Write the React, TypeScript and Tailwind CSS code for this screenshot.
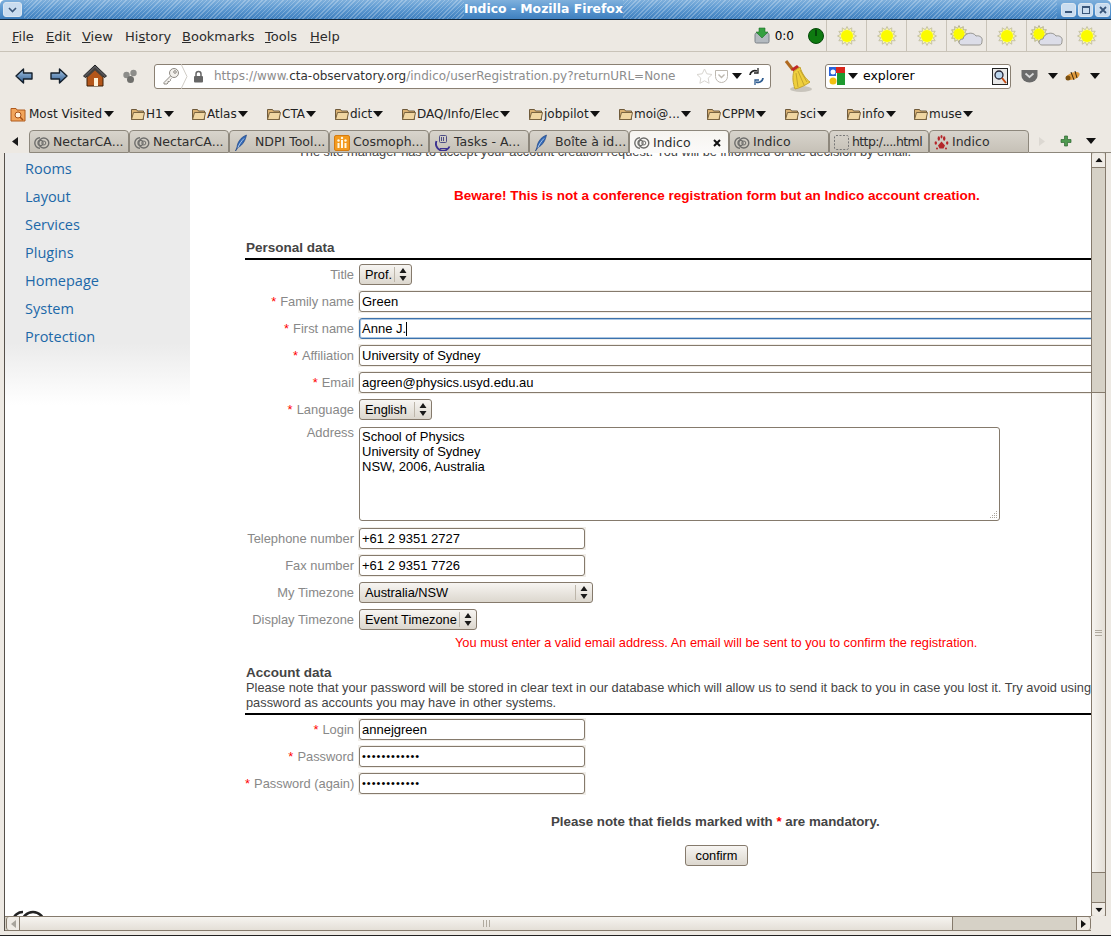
import type { ReactNode } from 'react';

const sunPoints = (cx: number, cy: number, r1: number, r2: number) =>
  Array.from({ length: 24 }, (_, i) => {
    const a = (i * Math.PI) / 12;
    const r = i % 2 ? r2 : r1;
    return `${(cx + r * Math.cos(a)).toFixed(1)},${(cy + r * Math.sin(a)).toFixed(1)}`;
  }).join(' ');

const Sun = () => (
  <svg width="20" height="20" viewBox="0 0 20 20">
    <polygon points={sunPoints(10, 10, 9.5, 6.5)} fill="#faf8a0" stroke="#bdb9a0" strokeWidth="0.8" />
    <circle cx="10" cy="10" r="6" fill="#fbfb00" />
  </svg>
);

const Cloudy = () => (
  <svg width="34" height="22" viewBox="0 0 34 22">
    <polygon points={sunPoints(9, 9, 8.5, 5.8)} fill="#faf8a0" stroke="#a8a480" strokeWidth="0.8" />
    <circle cx="9" cy="9" r="5.500" fill="#fbfb00" />
    <path d="M12 20c-4 0-4-6 1-6 1-6 10-8 13-3 4-1 7 2 6 5 0 3-1 4-3 4z" fill="#dcdde8" stroke="#8f8d88" strokeWidth="0.900" />
  </svg>
);

const Folder = () => (
  <svg width="16" height="15" viewBox="0 0 16 15" className="shrink-0">
    <path d="M1.500 3.500h5l1 1.500h6v8.500h-12z" fill="#d9b173" stroke="#6f5a3a" strokeWidth="1" />
    <path d="M3.500 6.500h11l-1.500 7h-11.500z" fill="#f0d6a2" stroke="#7a6440" strokeWidth="1" />
  </svg>
);

const Swirl = () => (
  <svg width="16" height="14" viewBox="0 0 16 14" className="shrink-0" fill="none" stroke="#6e6e6c">
    <path d="M6 1.800a5.200 5.200 0 1 0 0 10.400" strokeWidth="1.400" />
    <circle cx="9.800" cy="7" r="5" strokeWidth="1.400" />
    <circle cx="6.500" cy="7" r="2.600" strokeWidth="1.100" />
    <circle cx="9.800" cy="7" r="2" strokeWidth="1" />
  </svg>
);

const Feather = () => (
  <svg width="14" height="18" viewBox="0 0 14 18" className="shrink-0">
    <path d="M12.500 1C7 3 3.500 8 3 13l-1.500 4 2.500-3.500C9 11 11.500 6 12.500 1z" fill="#3268b4" stroke="#1d3f80" strokeWidth="0.600" />
    <path d="M10 4.500C7.500 7 5 10.500 4 13.500" stroke="#cfe0f5" strokeWidth="0.800" fill="none" />
  </svg>
);

const Cosmo = () => (
  <svg width="16" height="16" viewBox="0 0 16 16" className="shrink-0">
    <rect x="0.500" y="0.500" width="15" height="15" rx="1.500" fill="#f39a1d" stroke="#d57c10" />
    <path d="M4.500 8v5M8 5v8M11.500 8v5" stroke="#fff8e4" strokeWidth="2" />
    <circle cx="4.500" cy="5.500" r="1.200" fill="#fff8e4" />
    <circle cx="8" cy="3" r="1.200" fill="#fff8e4" />
    <circle cx="11.500" cy="5.500" r="1.200" fill="#fff8e4" />
  </svg>
);

const Tasks = () => (
  <svg width="17" height="17" viewBox="0 0 17 17" className="shrink-0" fill="none">
    <path d="M2.500 7a6.500 6.500 0 0 0 13 5.500" stroke="#3c3290" strokeWidth="1.900" />
    <path d="M6 14.500h9" stroke="#3c3290" />
    <rect x="5.500" y="1.500" width="7" height="7" rx="1" stroke="#4d4d86" />
    <path d="M7.500 3v4M9.500 3v4" stroke="#4d4d86" />
  </svg>
);

const Dashed = () => (
  <svg width="15" height="15" viewBox="0 0 15 15" className="shrink-0" fill="none">
    <rect x="0.500" y="0.500" width="14" height="14" rx="1.500" stroke="#777" strokeDasharray="2 1.500" />
  </svg>
);

const Paw = () => (
  <svg width="15" height="16" viewBox="0 0 15 16" className="shrink-0" fill="#b4262a">
    <path d="M7.500 6.500l3.500 4-1.500 3h-4l-1.500-3z" />
    <ellipse cx="1.800" cy="8" rx="1.200" ry="1.800" />
    <ellipse cx="13.200" cy="8" rx="1.200" ry="1.800" />
    <ellipse cx="4.800" cy="3.500" rx="1.200" ry="2.200" />
    <ellipse cx="10.200" cy="3.500" rx="1.200" ry="2.200" />
    <ellipse cx="7.500" cy="1.800" rx="1" ry="1.800" />
    <circle cx="3" cy="13.500" r="1" />
    <circle cx="12" cy="13.500" r="1" />
  </svg>
);

const DownCaret = ({ className = '' }: { className?: string }) => (
  <svg width="10" height="6" viewBox="0 0 10 6" className={`shrink-0 ${className}`}><path d="M0 0h10L5 6z" fill="#111" /></svg>
);

const Updown = () => (
  <svg width="8" height="13" viewBox="0 0 8 13" className="shrink-0" fill="#1a1a1a">
    <path d="M4 0l3.500 5h-7zM4 13l3.500-5h-7z" />
  </svg>
);

const NavArrow = ({ flip = false }: { flip?: boolean }) => (
  <svg width="18" height="16" viewBox="0 0 18 16" className={flip ? 'scale-x-[-1]' : ''}>
    <defs>
      <linearGradient id="navg" x1="0" y1="0" x2="0" y2="1"><stop offset="0" stopColor="#a9c8e6" /><stop offset="1" stopColor="#2e5c90" /></linearGradient>
    </defs>
    <path d="M1 8l7.500-7v4h8.500v6h-8.500v4z" fill="url(#navg)" stroke="#15202c" strokeWidth="1.400" strokeLinejoin="round" />
  </svg>
);

const bookmarks = [
  { label: 'H1', w: 'w-[61px]' },
  { label: 'Atlas', w: 'w-[75px]' },
  { label: 'CTA', w: 'w-[68px]' },
  { label: 'dict', w: 'w-[67px]' },
  { label: 'DAQ/Info/Elec', w: 'w-[127px]' },
  { label: 'jobpilot', w: 'w-[90px]' },
  { label: 'moi@...', w: 'w-[88px]' },
  { label: 'CPPM', w: 'w-[78px]' },
  { label: 'sci', w: 'w-[62px]' },
  { label: 'info', w: 'w-[67px]' },
  { label: 'muse', w: 'w-[70px]' },
];

const tabs: { icon: ReactNode; label: string; active?: boolean; tight?: boolean }[] = [
  { icon: <Swirl />, label: 'NectarCA...' },
  { icon: <Swirl />, label: 'NectarCA...' },
  { icon: <Feather />, label: ' NDPI Tool...' },
  { icon: <Cosmo />, label: 'Cosmoph...' },
  { icon: <Tasks />, label: 'Tasks - A...' },
  { icon: <Feather />, label: ' Boîte à id...' },
  { icon: <Swirl />, label: 'Indico', active: true },
  { icon: <Swirl />, label: 'Indico' },
  { icon: <Dashed />, label: 'http:/....html', tight: true },
  { icon: <Paw />, label: 'Indico' },
];

const sideLinks = ['Rooms', 'Layout', 'Services', 'Plugins', 'Homepage', 'System', 'Protection'];

const Row = ({ label, required, children }: { label: string; required?: boolean; children: ReactNode }) => (
  <div className="flex h-[27px] items-center">
    <div className="w-[110px] shrink-0 whitespace-nowrap pr-px text-right text-[12.9px] text-[#888]">
      {required && <span className="mr-1 text-[#f00]">*</span>}{label}
    </div>
    <div className="ml-[3px] flex min-w-0 flex-1 items-center">{children}</div>
  </div>
);

const Field = ({ value, focus, w = 'w-[800px]', type }: { value: string; focus?: boolean; w?: string; type?: string }) => (
  <div className={`flex h-[23px] shrink-0 items-center bg-[#f1eee9] px-px ${w}`}>
    <div className={`flex h-[21px] w-full items-center rounded-[3px] border bg-white pl-[2px] text-[13px] text-black ${focus ? 'border-[#3c72ac] shadow-[0_0_0_1px_#a9c5e2_inset]' : 'border-[#857a6c]'}`}>
      <span className={type === 'password' ? 'text-[11px] tracking-[1px]' : ''}>{value}</span>
      {focus && <span className="h-[14px] w-px bg-black" />}
    </div>
  </div>
);

const Select = ({ value, w }: { value: string; w: string }) => (
  <div className={`ml-px flex h-[21px] items-center rounded-[3px] border border-[#857a6c] bg-gradient-to-b from-[#f7f5f2] to-[#dcd7ce] pl-[5px] pr-[4px] text-black ${w}`}>
    <span className="flex-1 whitespace-nowrap">{value}</span>
    <span className="mr-[4px] h-[15px] w-px bg-[#bdb6aa]" />
    <Updown />
  </div>
);

export default function App() {
  return (
    <div className="flex h-[936px] w-[1111px] flex-col overflow-hidden rounded-t-[5px] bg-[#ede9e3] font-['DejaVu_Sans',sans-serif] text-[12px] text-[#2e2e2e]">
      {/* title bar */}
      <div className="flex h-[20px] shrink-0 items-center border-b border-[#10263c] bg-gradient-to-b from-[#7fb0dc] via-[#5a97d0] to-[#3f7fbe]">
        <div className="ml-[3px] flex h-[15px] w-[19px] items-center justify-center rounded-[3px] border border-[#dbe6f0] bg-[#c9dcef]">
          <svg width="9" height="6" viewBox="0 0 9 6"><path d="M1 1l3.500 3.500L8 1" fill="none" stroke="#39567a" strokeWidth="1.600" /></svg>
        </div>
        <div className="ml-[2px] h-full w-[440px] bg-[repeating-linear-gradient(135deg,#ffffff40_0,#ffffff40_1px,transparent_1px,transparent_3px)]" />
        <div className="w-[159px] shrink-0 whitespace-nowrap text-center text-[12.4px] font-bold text-white">Indico - Mozilla Firefox</div>
        <div className="h-full flex-1 bg-[repeating-linear-gradient(135deg,#ffffff40_0,#ffffff40_1px,transparent_1px,transparent_3px)]" />
        <div className="mr-[1px] flex gap-[2px] pl-[4px]">
          {['min', 'max', 'close'].map(k => (
            <div key={k} className="flex h-[14px] w-[15px] items-center justify-center rounded-[3px] border border-[#dbe6f0] bg-[#c9dcef]">
              {k === 'min' && <div className="mt-[5px] h-[2px] w-[7px] bg-[#39567a]" />}
              {k === 'max' && <div className="h-[8px] w-[8px] border border-t-2 border-[#39567a]" />}
              {k === 'close' && <svg width="8" height="8" viewBox="0 0 8 8"><path d="M1 1l6 6M7 1L1 7" stroke="#39567a" strokeWidth="1.800" /></svg>}
            </div>
          ))}
        </div>
      </div>

      {/* menu */}
      <div className="flex h-[32px] shrink-0 items-stretch border-b border-[#c9c3b8] pl-[12px]">
        <div className="flex items-center pt-[2px] text-[13px] text-[#2b2b2b]">
          <span className="w-[34px]"><u>F</u>ile</span>
          <span className="w-[36px]"><u>E</u>dit</span>
          <span className="w-[43px]"><u>V</u>iew</span>
          <span className="w-[57px]">Hi<u>s</u>tory</span>
          <span className="w-[83px]"><u>B</u>ookmarks</span>
          <span className="w-[45px]"><u>T</u>ools</span>
          <span><u>H</u>elp</span>
        </div>
        <div className="flex flex-1 items-center justify-end">
          <svg width="16" height="17" viewBox="0 0 16 17" className="mr-[5px]">
            <rect x="1" y="6" width="14" height="10" rx="1.500" fill="#b4bac0" stroke="#7c8288" />
            <path d="M5 1h6v4h3l-6 6-6-6h3z" fill="#35a040" stroke="#1f6e28" strokeWidth="0.600" />
          </svg>
          <span className="mr-[14px] text-[12px] text-black">0:0</span>
          <svg width="16" height="16" viewBox="0 0 16 16" className="mr-[2px]">
            <circle cx="8" cy="8" r="7.500" fill="#0e7a10" stroke="#06480a" />
            <path d="M8 1.500v6.500" stroke="#04360a" strokeWidth="1.500" />
          </svg>
          {['s', 's', 's', 'c', 's', 'c', 's'].map((t, i) => (
            <div key={i} className="flex h-full w-[40px] items-center justify-center border-l border-[#c9c3b8]">
              {t === 's' ? <Sun /> : <Cloudy />}
            </div>
          ))}
          <div className="w-[5px]" />
        </div>
      </div>

      {/* nav toolbar */}
      <div className="flex h-[48px] shrink-0 items-center pl-[15px]">
        <NavArrow />
        <div className="w-[17px]" />
        <NavArrow flip />
        <svg width="26" height="26" viewBox="0 0 26 26" className="ml-[14px]">
          <path d="M1.500 13L13 2l11.500 11-2 1.500L13 6 3.500 14.500z" fill="#55555a" stroke="#222" />
          <path d="M5 13.500L13 6l8 7.500V23H5z" fill="#b4561a" stroke="#3c2008" />
          <path d="M5 13.500L13 6l8 7.500" fill="none" stroke="#44403c" strokeWidth="2" />
          <rect x="12" y="15" width="4" height="8" fill="#fff2d8" />
        </svg>
        <svg width="16" height="15" viewBox="0 0 16 15" className="ml-[14px]" fill="#8d8d8a">
          <circle cx="4.500" cy="6" r="3.200" />
          <circle cx="11.500" cy="4" r="3.200" />
          <circle cx="8.500" cy="10.500" r="3.500" fill="#6f6f6c" />
        </svg>
        <div className="ml-[16px] flex h-[25px] w-[617px] items-center rounded-[3px] border border-[#8a8073] bg-white">
          <svg width="18" height="18" viewBox="0 0 18 18" className="ml-[7px]" fill="none" stroke="#8e8a84">
            <circle cx="12" cy="6" r="4.500" fill="#f2f0ec" />
            <circle cx="13" cy="5" r="1.300" />
            <path d="M8.500 9l-6.500 6.500v1.500h3l1-1v-1.500h1.500l1-1V12.500l1-1" fill="#f2f0ec" />
          </svg>
          <svg width="7" height="25" viewBox="0 0 7 25" className="ml-[1px]"><path d="M0 0l6 12.500L0 25" fill="none" stroke="#d0ccc6" /></svg>
          <svg width="11" height="13" viewBox="0 0 11 13" className="ml-[5px]">
            <path d="M3 6V4a2.500 2.500 0 0 1 5 0v2" fill="none" stroke="#666" strokeWidth="1.500" />
            <rect x="1" y="6" width="9" height="6.500" rx="1" fill="#666" />
          </svg>
          <span className="ml-[10px] flex-1 whitespace-nowrap text-[12px] text-[#8c8c8c]">https://www.<span className="text-[#333]">cta-observatory.org</span>/indico/userRegistration.py?returnURL=None</span>
          <svg width="17" height="16" viewBox="0 0 17 16"><path d="M8.500 1l2.300 4.800 5.200.7-3.800 3.600.9 5.200-4.600-2.500-4.600 2.500.9-5.200L1 6.500l5.200-.7z" fill="none" stroke="#d8d5d0" /></svg>
          <svg width="15" height="15" viewBox="0 0 15 15" className="ml-[1px]" fill="none" stroke="#bdb8b0">
            <path d="M1.500 1.500h12v6a6 6 0 0 1-12 0z" />
            <path d="M4.500 5.500l3 3 3-3" strokeWidth="1.400" />
          </svg>
          <DownCaret className="ml-[3px]" />
          <svg width="17" height="17" viewBox="0 0 17 17" className="ml-[6px] mr-[5px]" fill="none" strokeWidth="1.800">
            <path d="M2 7a5 5 0 0 1 7-4" stroke="#222" />
            <path d="M10 0v5H6" stroke="#222" strokeWidth="1.300" />
            <path d="M15 10a5 5 0 0 1-7 4" stroke="#2e5c90" />
            <path d="M7 17v-5h4" stroke="#2e5c90" strokeWidth="1.300" />
          </svg>
        </div>
        <svg width="30" height="34" viewBox="0 0 30 34" className="ml-[12px]">
          <ellipse cx="18" cy="30" rx="11" ry="3" fill="#c8c4bc" />
          <path d="M3 2l7 9" stroke="#b06a20" strokeWidth="3" />
          <path d="M8 10l6-4 3 3-6 4z" fill="#c02828" />
          <path d="M11 12l6-4c2 7 6 12 10 15-4 3-10 6-15 7-2-6-3-12-1-18z" fill="#efcf3c" stroke="#c4a42e" />
          <path d="M13 14l2 14M15 12l6 14M17 11l7 12" stroke="#c4a42e" />
        </svg>
        <div className="ml-[12px] flex h-[25px] w-[186px] items-center rounded-[3px] border border-[#8a8073] bg-white">
          <svg width="16" height="18" viewBox="0 0 16 18" className="ml-[3px]">
            <rect x="0" y="0" width="7" height="9" fill="#2a62d8" />
            <rect x="7" y="0" width="9" height="6" fill="#d8261c" />
            <rect x="8" y="6" width="8" height="12" fill="#1e9a30" />
            <circle cx="4" cy="14" r="3.500" fill="#f3c011" />
            <circle cx="4" cy="5" r="2.500" fill="#fff" />
          </svg>
          <DownCaret className="ml-[3px]" />
          <span className="ml-[5px] flex-1 text-[12.500px] text-black">explorer</span>
          <svg width="16" height="17" viewBox="0 0 16 17" className="mr-[2px]">
            <rect x="0.500" y="0.500" width="15" height="16" fill="#e8e8e8" stroke="#222" />
            <circle cx="7" cy="7" r="4" fill="#bcd6ee" stroke="#223" strokeWidth="1.300" />
            <path d="M10 10l4 5" stroke="#c24a14" strokeWidth="2" />
          </svg>
        </div>
        <svg width="17" height="14" viewBox="0 0 17 14" className="ml-[10px]">
          <path d="M0.500 1h16v6a8 6.500 0 0 1-16 0z" fill="#6a6a6a" />
          <path d="M4.500 4.500l4 3.500 4-3.500" fill="none" stroke="#d8d8d8" strokeWidth="1.700" />
        </svg>
        <DownCaret className="ml-[10px]" />
        <svg width="17" height="14" viewBox="0 0 17 14" className="ml-[6px]">
          <ellipse cx="9" cy="7" rx="7" ry="3.500" fill="#e09a3c" transform="rotate(-20 9 7)" />
          <circle cx="4" cy="9" r="2.500" fill="#7c5010" />
          <path d="M7 3l3 8M11 2l2 7" stroke="#3a2a10" />
        </svg>
        <DownCaret className="ml-[9px]" />
      </div>

      {/* bookmarks */}
      <div className="flex h-[27px] shrink-0 items-center pl-[10px] text-[12px] text-[#222]">
        <div className="flex w-[120px] items-center">
          <svg width="16" height="16" viewBox="0 0 16 16" className="shrink-0">
            <path d="M1 2.500h5l1 1.500h8v11H1z" fill="#f2a55c" stroke="#b05a1c" />
            <circle cx="8" cy="9" r="3" fill="#fff1de" stroke="#a54e14" />
            <path d="M10 11l3 3" stroke="#a54e14" strokeWidth="1.500" />
          </svg>
          <span className="ml-[3px] whitespace-nowrap">Most Visited</span>
          <DownCaret className="ml-[2px]" />
        </div>
        {bookmarks.map(b => (
          <div key={b.label} className={`flex items-center ${b.w}`}>
            <Folder />
            <span className="whitespace-nowrap">{b.label}</span>
            <DownCaret className="ml-[1px]" />
          </div>
        ))}
      </div>

      {/* tabs */}
      <div className="flex h-[26px] shrink-0 items-end">
        <div className="flex h-[23px] w-[29px] items-center justify-center"><svg width="6" height="9" viewBox="0 0 6 9"><path d="M6 0v9L0 4.500z" fill="#1a1a1a" /></svg></div>
        {tabs.map((t, i) => (
          <div
            key={i}
            className={`flex h-[23px] w-[100px] items-center gap-[3px] overflow-hidden rounded-t-[4px] border border-[#8d877c] pl-[4px] pr-[1px] pt-[2px] text-[12.500px] ${t.active ? 'border-b-0 bg-gradient-to-b from-[#f6f4f0] to-[#fbfaf9]' : 'bg-gradient-to-b from-[#d8d4cc] to-[#c6c1b7]'}`}
          >
            {t.icon}
            <span className={`flex-1 whitespace-pre ${t.tight ? 'tracking-[-0.6px]' : ''}`}>{t.label}</span>
            {t.active && <svg width="8" height="8" viewBox="0 0 8 8" className="mr-[6px]"><path d="M1 1l6 6M7 1L1 7" stroke="#111" strokeWidth="2" /></svg>}
          </div>
        ))}
        <div className="flex h-[23px] flex-1 items-center border-b border-[#8d877c]">
          <svg width="6" height="9" viewBox="0 0 6 9" className="ml-[10px]"><path d="M0 0v9l6-4.500z" fill="#dcd8d2" /></svg>
          <svg width="12" height="12" viewBox="0 0 12 12" className="ml-[15px]"><path d="M4.500 1h3v3.500H11v3H7.500V11h-3V7.500H1v-3h3.500z" fill="#4f9a50" stroke="#2f6632" strokeWidth="0.700" /></svg>
          <DownCaret className="ml-[14px]" />
        </div>
      </div>

      {/* page area */}
      <div className="flex min-h-0 flex-1 pl-[4px] pr-[5px]">
        <div className="flex min-w-0 flex-1 flex-col border-l border-[#55504a]">
          <div className="flex min-h-0 flex-1">
            <div className="flex min-w-0 flex-1 overflow-hidden bg-white">
              <aside className="h-[252px] w-[185px] shrink-0 bg-[linear-gradient(#ebebeb_0,#ebebeb_190px,#fff_100%)] pl-[20px] pt-[2px] font-['Open_Sans',sans-serif] text-[14.5px] leading-[28px] text-[#1c68a8]">
                {sideLinks.map(l => <div key={l}>{l}</div>)}
              </aside>
              <main className="relative min-w-0 flex-1 font-['Liberation_Sans',sans-serif] text-[12.8px] text-[#444]">
                <div className="-mt-[9px] h-[16px] whitespace-nowrap pl-[108px] leading-[16px]">The site manager has to accept your account creation request. You will be informed of the decision by email.</div>
                <p className="ml-[264px] mt-[28px] whitespace-nowrap text-[13.500px] font-bold leading-[16px] text-[#f00]">Beware! This is not a conference registration form but an Indico account creation.</p>
                <div className="ml-[55px] mt-[36px]">
                  <h3 className="ml-px text-[13.500px] font-bold leading-[16px]">Personal data</h3>
                  <div className="mb-px mt-[2px] h-[2px] w-[900px] bg-black" />
                  <Row label="Title"><Select value="Prof." w="w-[53px]" /></Row>
                  <Row label="Family name" required><Field value="Green" /></Row>
                  <Row label="First name" required><Field value="Anne J." focus /></Row>
                  <Row label="Affiliation" required><Field value="University of Sydney" /></Row>
                  <Row label="Email" required><Field value="agreen@physics.usyd.edu.au" /></Row>
                  <Row label="Language" required><Select value="English" w="w-[73px]" /></Row>
                  <div className="mt-[4px] flex h-[98px] items-start">
                    <div className="w-[110px] shrink-0 pr-px text-right text-[12.9px] leading-[12px] text-[#888]">Address</div>
                    <div className="relative ml-[4px] h-[94px] w-[641px] rounded-[3px] border border-[#857a6c] bg-white pl-[2px] pt-[1px] text-[13px] leading-[15px] text-black">
                      <div>School of Physics</div>
                      <div>University of Sydney</div>
                      <div>NSW, 2006, Australia</div>
                      <svg width="9" height="9" viewBox="0 0 9 9" className="absolute bottom-px right-px" fill="#a9a49b">
                        <rect x="7" y="1" width="1" height="1" /><rect x="5" y="3" width="1" height="1" /><rect x="7" y="3" width="1" height="1" /><rect x="3" y="5" width="1" height="1" /><rect x="5" y="5" width="1" height="1" /><rect x="7" y="5" width="1" height="1" /><rect x="1" y="7" width="1" height="1" /><rect x="3" y="7" width="1" height="1" /><rect x="5" y="7" width="1" height="1" /><rect x="7" y="7" width="1" height="1" />
                      </svg>
                    </div>
                  </div>
                  <Row label="Telephone number"><Field value="+61 2 9351 2727" w="w-[228px]" /></Row>
                  <Row label="Fax number"><Field value="+61 2 9351 7726" w="w-[228px]" /></Row>
                  <Row label="My Timezone"><Select value="Australia/NSW" w="w-[234px]" /></Row>
                  <Row label="Display Timezone"><Select value="Event Timezone" w="w-[118px]" /></Row>
                  <p className="ml-[210px] mt-[2px] whitespace-nowrap leading-[16px] text-[#f00]">You must enter a valid email address. An email will be sent to you to confirm the registration.</p>
                  <h3 className="ml-px mt-[14px] text-[13.500px] font-bold leading-[15px]">Account data</h3>
                  <p className="ml-px w-[900px] whitespace-nowrap leading-[15px]">
                    Please note that your password will be stored in clear text in our database which will allow us to send it back to you in case you lost it. Try avoid using the same<br />
                    password as accounts you may have in other systems.
                  </p>
                  <div className="mb-[1px] mt-[3px] h-[2px] w-[900px] bg-black" />
                  <Row label="Login" required><Field value="annejgreen" w="w-[228px]" /></Row>
                  <Row label="Password" required><Field value="••••••••••••" w="w-[228px]" type="password" /></Row>
                  <Row label="Password (again)" required><Field value="••••••••••••" w="w-[228px]" type="password" /></Row>
                  <p className="ml-[306px] mt-[17px] whitespace-nowrap text-[13.300px] font-bold leading-[16px]">Please note that fields marked with <span className="text-[#f00]">*</span> are mandatory.</p>
                  <button className="ml-[440px] mt-[15px] flex h-[21px] w-[63px] items-center justify-center rounded-[3px] border border-[#857a6c] bg-gradient-to-b from-[#f7f5f2] to-[#dcd7ce] text-black">confirm</button>
                </div>
                <div className="absolute bottom-[-4px] left-[-180px]">
                  <svg width="34" height="10" viewBox="0 0 34 10" fill="none" stroke="#222" strokeWidth="2.500"><path d="M3 10a10 10 0 0 1 10-8" /><circle cx="23" cy="13" r="11" /></svg>
                </div>
              </main>
            </div>
            {/* vertical scrollbar */}
            <div className="flex w-[14px] shrink-0 flex-col border-l border-[#857a6c] bg-[#d6d1c6]">
              <div className="flex h-[15px] items-center justify-center rounded-t-[3px] border-b border-[#857a6c] bg-[#efebe5]"><DownCaret className="rotate-180 scale-75" /></div>
              <div className="h-[224px]" />
              <div className="flex h-[481px] items-center justify-center border-y border-[#857a6c] bg-gradient-to-r from-[#f6f4f0] to-[#e4dfd7]">
                <div className="h-[6px] w-[7px] border-y border-[#b0aa9f] bg-[linear-gradient(#b0aa9f,#b0aa9f)] bg-[length:100%_1px] bg-center bg-no-repeat" />
              </div>
              <div className="flex-1" />
              <div className="flex h-[14px] items-center justify-center rounded-b-[3px] border-t border-[#857a6c] bg-[#efebe5]"><DownCaret className="scale-75" /></div>
            </div>
            <div className="w-px shrink-0 bg-[#857a6c]" />
          </div>
          {/* horizontal scrollbar */}
          <div className="flex h-[15px] shrink-0 pr-[15px]">
            <div className="flex min-w-0 flex-1 border-y border-[#857a6c] bg-[#d6d1c6]">
              <div className="ml-[1px] flex w-[14px] items-center justify-center rounded-l-[3px] border-x border-[#857a6c] bg-[#efebe5]"><svg width="5" height="8" viewBox="0 0 5 8"><path d="M5 0v8L0 4z" fill="#a8a49c" /></svg></div>
              <div className="flex w-[933px] items-center justify-center border-r border-[#857a6c] bg-gradient-to-b from-[#f6f4f0] to-[#e4dfd7]">
                <div className="h-[7px] w-[7px] border-x border-[#b0aa9f] bg-[linear-gradient(#b0aa9f,#b0aa9f)] bg-[length:1px_100%] bg-center bg-no-repeat" />
              </div>
              <div className="flex-1" />
              <div className="flex w-[15px] items-center justify-center rounded-r-[3px] border-x border-[#857a6c] bg-[#efebe5]"><svg width="5" height="8" viewBox="0 0 5 8"><path d="M0 0v8l5-4z" fill="#111" /></svg></div>
            </div>
          </div>
        </div>
      </div>
      <div className="h-[5px] shrink-0 border-b border-[#222]" />
    </div>
  );
}
